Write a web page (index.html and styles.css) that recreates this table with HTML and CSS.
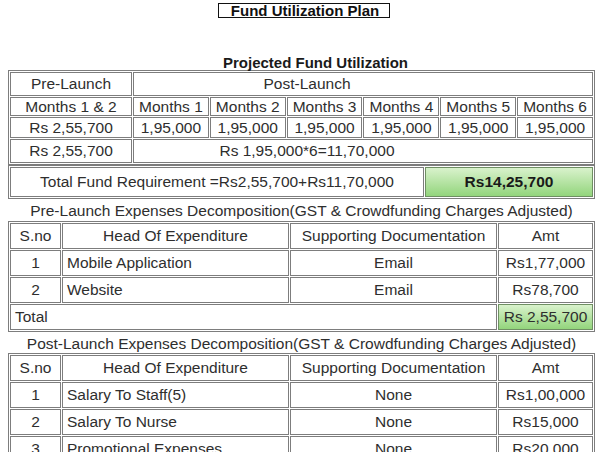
FILE: index.html
```html
<!DOCTYPE html>
<html lang="en">
<head>
<meta charset="UTF-8">
<meta name="viewport" content="width=device-width, initial-scale=1.0">
<title>Fund Utilization Plan</title>
<link rel="stylesheet" href="styles.css">
</head>
<body>
<div class="title"><span>Fund Utilization Plan</span></div>

<h2 class="heading">Projected Fund Utilization</h2>
<table class="grid plan">
    <colgroup>
    <col class="c-pre">
    <col><col><col><col><col><col>
    </colgroup>
    <tr class="r-top">
    <td>Pre-Launch</td>
    <td colspan="6" class="offset">Post-Launch</td>
    </tr>
    <tr class="r-months">
    <td>Months 1 &amp; 2</td>
    <td>Months 1</td>
    <td>Months 2</td>
    <td>Months 3</td>
    <td>Months 4</td>
    <td>Months 5</td>
    <td>Months 6</td>
    </tr>
    <tr class="r-values">
    <td>Rs 2,55,700</td>
    <td>1,95,000</td>
    <td>1,95,000</td>
    <td>1,95,000</td>
    <td>1,95,000</td>
    <td>1,95,000</td>
    <td>1,95,000</td>
    </tr>
    <tr class="r-sum">
    <td>Rs 2,55,700</td>
    <td colspan="6" class="offset">Rs 1,95,000*6=11,70,000</td>
    </tr>
</table>
<table class="grid total">
    <colgroup>
    <col class="c-req">
    <col>
    </colgroup>
    <tr>
    <td>Total Fund Requirement =Rs2,55,700+Rs11,70,000</td>
    <td class="green strong">Rs14,25,700</td>
    </tr>
</table>

<p class="caption">Pre-Launch Expenses Decomposition(GST &amp; Crowdfunding Charges Adjusted)</p>
<table class="grid expenses">
    <colgroup>
    <col class="c-sno"><col class="c-head"><col class="c-doc"><col>
    </colgroup>
    <tr>
    <td>S.no</td>
    <td>Head Of Expenditure</td>
    <td>Supporting Documentation</td>
    <td>Amt</td>
    </tr>
    <tr>
    <td>1</td>
    <td class="left">Mobile Application</td>
    <td>Email</td>
    <td>Rs1,77,000</td>
    </tr>
    <tr>
    <td>2</td>
    <td class="left">Website</td>
    <td>Email</td>
    <td>Rs78,700</td>
    </tr>
    <tr>
    <td colspan="3" class="left">Total</td>
    <td class="green">Rs 2,55,700</td>
    </tr>
</table>

<p class="caption tight">Post-Launch Expenses Decomposition(GST &amp; Crowdfunding Charges Adjusted)</p>
<table class="grid expenses">
    <colgroup>
    <col class="c-sno"><col class="c-head"><col class="c-doc"><col>
    </colgroup>
    <tr>
    <td>S.no</td>
    <td>Head Of Expenditure</td>
    <td>Supporting Documentation</td>
    <td>Amt</td>
    </tr>
    <tr>
    <td>1</td>
    <td class="left">Salary To Staff(5)</td>
    <td>None</td>
    <td>Rs1,00,000</td>
    </tr>
    <tr>
    <td>2</td>
    <td class="left">Salary To Nurse</td>
    <td>None</td>
    <td>Rs15,000</td>
    </tr>
    <tr>
    <td>3</td>
    <td class="left">Promotional Expenses</td>
    <td>None</td>
    <td>Rs20,000</td>
    </tr>
</table>
</body>
</html>
```

FILE: styles.css
```css
body {
font-family: "Liberation Sans", Arial, sans-serif;
font-size: 15.5px;
color: #2e2e2e;
background-color: #fff;
margin: 0;
padding: 2px 8px 0 8px;
}
.title {
text-align: center;
padding-left: 5px;
font-size: 15px;
}
.title span {
display: inline-block;
border: 1px solid #111;
padding: 0 10px 0 12px;
line-height: 13px;
font-weight: bold;
color: #111;
}
.heading {
margin: 36px 0 0 0;
padding-left: 28px;
font-size: 15px;
line-height: 15px;
text-align: center;
color: #1a1a1a;
}

/* bordered tables */
.grid {
width: 587px;
table-layout: fixed;
border-collapse: separate;
border-spacing: 1px;
border: 1px solid #7d7d7d;
}
.grid td {
border: 1px solid #7d7d7d;
padding: 0 3px;
text-align: center;
white-space: nowrap;
overflow: hidden;
}
.grid td.left {
text-align: left;
padding-left: 4px;
}
.c-pre {
width: 122px;
}
.plan .offset {
padding-left: 2px;
padding-right: 114px;
}
.r-top td { height: 22px; }
.r-months td { height: 17px; line-height: 17px; }
.r-values td { height: 19px; }
.r-sum td { height: 22px; }
.total td {
height: 28px;
}
.c-req {
width: 414px;
}
.green {
background: linear-gradient(#d9f2cc, #93d57c);
border-color: #6f8f63 !important;
}
.strong {
font-weight: bold;
color: #1a1a1a;
}
.caption {
margin: 2px 0 0 0;
line-height: 20px;
text-align: center;
}
.caption.tight {
margin-top: 2px;
line-height: 19px;
}
.expenses td {
height: 24px;
}
.c-sno { width: 51px; }
.c-head { width: 227px; }
.c-doc { width: 207px; }
```
